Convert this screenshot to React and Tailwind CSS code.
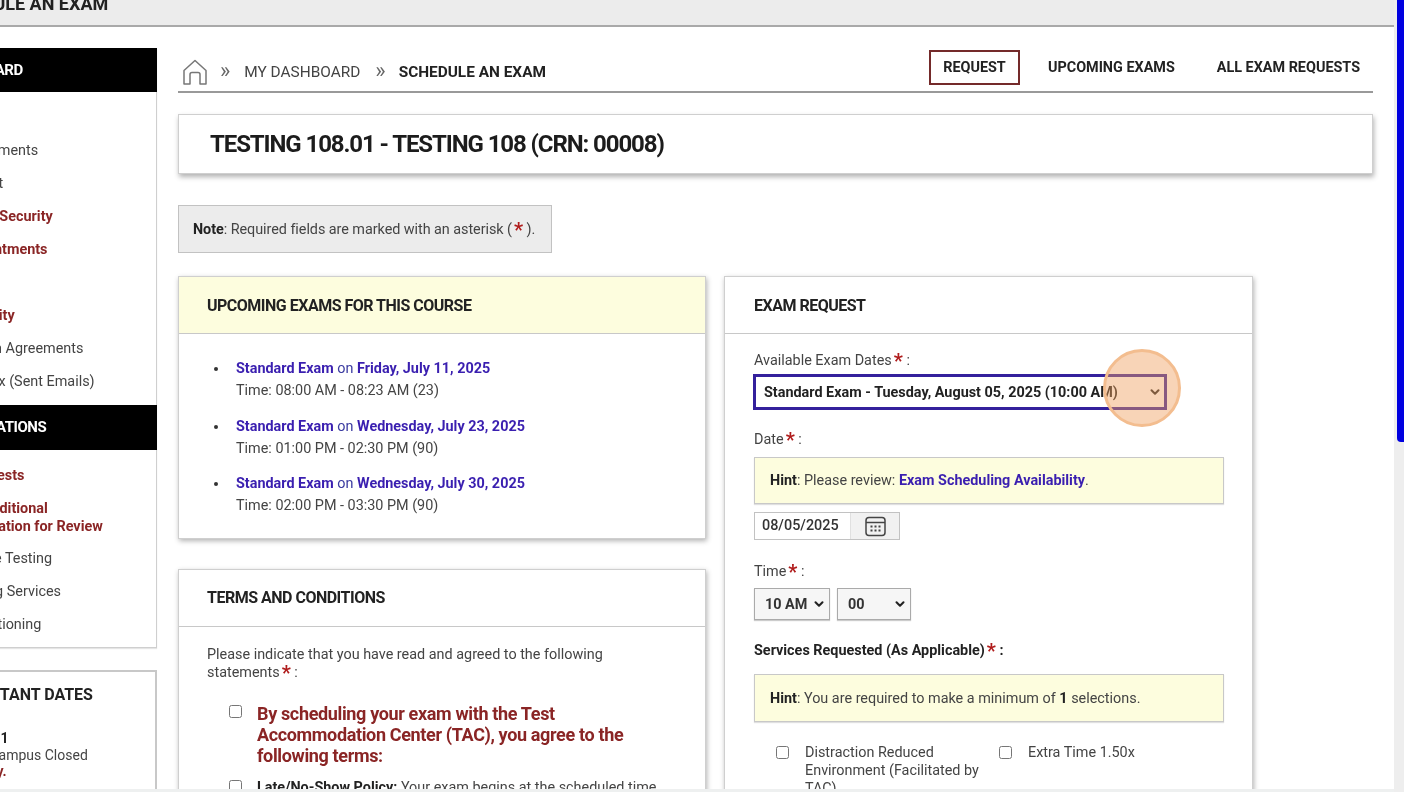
import { ChevronDown } from 'lucide-react';

const Star = () => <span className="text-[#b01c1c] font-bold text-[20px] leading-[14px] align-[-3px] ml-[2px]">*</span>;

const sideTop = [
  { text: 'View Documents', pad: 'pl-[73px]' },
  { text: 'My Account', pad: 'pl-[70px]' },
  { text: 'Account Security', red: true, pad: 'pl-[85px]' },
  { text: 'My Appointments', red: true, pad: 'pl-[76px]' },
  { text: 'Help' },
  { text: 'Accessibility', red: true },
  { text: 'Study Plan Agreements', pad: 'pl-[77px]' },
  { text: 'My Mailbox (Sent Emails)' },
];

const sideBottom = [
  { text: 'Test Requests', red: true },
  { text: ['Submit Additional', 'Documentation for Review'], red: true },
  { text: 'Alternative Testing', pad: 'pl-[76px]' },
  { text: 'Notetaking Services', pad: 'pl-[76px]' },
  { text: 'Video Captioning' },
];

const exams = [
  { day: 'Friday, July 11, 2025', time: 'Time: 08:00 AM - 08:23 AM (23)' },
  { day: 'Wednesday, July 23, 2025', time: 'Time: 01:00 PM - 02:30 PM (90)' },
  { day: 'Wednesday, July 30, 2025', time: 'Time: 02:00 PM - 03:30 PM (90)' },
];

function SideRow({ item }) {
  const lines = Array.isArray(item.text) ? item.text : [item.text];
  return (
    <div className={`min-h-[33px] py-[7px] text-[14.4px] leading-[18px] whitespace-nowrap ${item.pad || 'pl-[75px]'} ${item.red ? 'font-bold text-[#8a2525]' : 'text-[#444]'}`}>
      {lines.map((l) => <div key={l}>{l}</div>)}
    </div>
  );
}

function HomeIcon() {
  return (
    <svg width="26" height="27" viewBox="0 0 26 27" fill="none" stroke="#777" strokeWidth="1.5" strokeLinejoin="round">
      <path d="M2 11.5 L13 1.5 L24 11.5 V25 H18 V15.5 Q18 13.5 16 13.5 H10 Q8 13.5 8 15.5 V25 H2 Z" />
    </svg>
  );
}

function CalendarIcon() {
  return (
    <svg width="21" height="21" viewBox="0 0 21 21" fill="none" stroke="#444" strokeWidth="1.5">
      <rect x="1" y="1.5" width="19" height="18" rx="3" />
      <path d="M1 6.5 H20" />
      <g fill="#444" stroke="none">
        <rect x="5.5" y="9.5" width="2" height="2" />
        <rect x="9.5" y="9.5" width="2" height="2" />
        <rect x="13.5" y="9.5" width="2" height="2" />
        <rect x="5.5" y="13.5" width="2" height="2" />
        <rect x="9.5" y="13.5" width="2" height="2" />
        <rect x="13.5" y="13.5" width="2" height="2" />
      </g>
    </svg>
  );
}

function Hint({ h, children }) {
  return (
    <div className={`${h} flex items-center px-[15px] bg-[#fdfdde] border border-[#c8c8c8] shadow-[0_1px_1px_rgba(0,0,0,0.12)] text-[14.4px] text-[#444]`}>
      <p>{children}</p>
    </div>
  );
}

function TimeSelect({ width, value }) {
  return (
    <div className={`relative ${width}`}>
      <select className="appearance-none w-full h-[32px] pl-[10px] pt-[1px] bg-[#f6f6f6] border border-[#aaa] shadow-[0_1px_1px_rgba(0,0,0,0.2)] font-bold text-[#333]" defaultValue={value}>
        <option value={value}>{value}</option>
      </select>
      <ChevronDown size={14} strokeWidth={3.5} className="absolute right-[4px] top-[9px] text-[#222] pointer-events-none" />
    </div>
  );
}

export default function App() {
  return (
    <div className="flex h-[792px] w-[1404px] overflow-hidden bg-white text-[#333] blur-[0.5px]" style={{ fontFamily: 'Roboto, "Liberation Sans", sans-serif' }}>
      <div className="flex-1 min-w-0 flex flex-col">
        <header className="h-[27px] shrink-0 bg-[#ececec] border-b-2 border-[#a9a9a9] overflow-hidden">
          <h1 className="-ml-[64px] -mt-[8px] text-[18px] leading-[24px] font-bold text-[#222] whitespace-nowrap">SCHEDULE AN EXAM</h1>
        </header>

        <div className="flex-1 min-h-0 overflow-hidden flex gap-[21px] pt-[21px] pr-[21px]">
          {/* sidebar runs off the left of the window */}
          <aside className="w-[300px] -ml-[143px] shrink-0">
            <div className="border-r border-b border-[#cfcfcf] bg-white shadow-[0_1px_1px_rgba(0,0,0,0.1)]">
              <h2 className="h-[44px] -mr-[1px] flex items-center pl-[57px] bg-black text-white font-bold text-[15px] tracking-[-0.5px] whitespace-nowrap">MY DASHBOARD</h2>
              <div className="pt-[42.5px] pb-[6.5px]">
                {sideTop.map((i) => <SideRow key={i.text} item={i} />)}
              </div>
              <h2 className="h-[45px] -mr-[1px] flex items-center pl-[57px] bg-black text-white font-bold text-[15px] tracking-[-0.5px] whitespace-nowrap">ACCOMMODATIONS</h2>
              <div className="pt-[10px] pb-[5px]">
                {sideBottom.map((i) => <SideRow key={String(i.text)} item={i} />)}
              </div>
            </div>
            <div className="mt-[22px] h-[200px] border-2 border-[#c8c8c8] pt-[12px]">
              <h3 className="pl-[91px] text-[16px] font-bold leading-[22px] text-[#222] whitespace-nowrap">IMPORTANT DATES</h3>
              <div className="mt-[24px] text-[14px] leading-[16.5px] whitespace-nowrap">
                <div className="pl-[52px] font-bold text-[#222]">July 4, 2025 - 1</div>
                <div className="pl-[96px] text-[#444]">Main Campus Closed</div>
                <div className="pl-[97px] font-bold text-[#8a2525]">Holiday.</div>
              </div>
            </div>
          </aside>

          <main className="flex-1 min-w-0">
            {/* breadcrumb + tabs */}
            <div className="h-[45px] flex justify-between border-b-2 border-[#999]">
              <nav className="flex items-center pl-[4px] pt-[5px] h-[44px] text-[15.4px] whitespace-nowrap text-[#444]">
                <HomeIcon />
                <span className="text-[#666] text-[22px] leading-none ml-[12px] mr-[14px] -mt-[4px]">»</span>
                <span>MY DASHBOARD</span>
                <span className="text-[#666] text-[22px] leading-none ml-[15px] mr-[13px] -mt-[4px]">»</span>
                <span className="font-bold text-[#222]">SCHEDULE AN EXAM</span>
              </nav>
              <div className="flex items-start pr-[13px] text-[14.4px] font-bold text-[#222] whitespace-nowrap">
                <span className="h-[35px] w-[91px] mt-[2px] flex items-center justify-center border-2 border-[#742a2a] mr-[28px]">REQUEST</span>
                <span className="h-[35px] mt-[2px] flex items-center mr-[42px]">UPCOMING EXAMS</span>
                <span className="h-[35px] mt-[2px] flex items-center">ALL EXAM REQUESTS</span>
              </div>
            </div>

            <div className="mt-[21px] h-[60px] flex items-center pl-[31px] bg-white border border-[#cfcfcf] shadow-[1px_3px_5px_rgba(0,0,0,0.3)]">
              <h2 className="text-[24px] font-bold text-[#1c1c1c] tracking-[-1.1px]">TESTING 108.01 - TESTING 108 (CRN: 00008)</h2>
            </div>

            <div className="mt-[31px] w-[374px] h-[48px] flex items-center pl-[14px] pt-[1px] bg-[#ececec] border border-[#c2c2c2] text-[14.4px] text-[#444] whitespace-nowrap">
              <p className="tracking-[-0.05px]"><b className="text-[#222]">Note</b>: Required fields are marked with an asterisk (<Star /> ).</p>
            </div>

            <div className="mt-[23px] flex gap-[18px] items-start">
              {/* left column */}
              <div className="w-[528px] shrink-0">
                <section className="h-[263px] bg-white border border-[#cfcfcf] shadow-[1px_2px_5px_rgba(0,0,0,0.3)]">
                  <h3 className="h-[57px] flex items-center pl-[28px] pt-[1px] bg-[#fdfdde] border-b border-[#c8c8c8] text-[16px] tracking-[-0.5px] font-bold text-[#222]">UPCOMING EXAMS FOR THIS COURSE</h3>
                  <ul className="pt-[24px] pl-[35px] text-[14.4px] leading-[22px] text-[#444]">
                    {exams.map((e) => (
                      <li key={e.day} className="mb-[13.5px] flex gap-[18px]">
                        <span className="w-[4px] h-[4px] mt-[9px] rounded-full bg-[#333] shrink-0" />
                        <div>
                          <div><b className="text-[#3a1fb0]">Standard Exam</b> <span className="text-[#3a3aa0]">on</span> <b className="text-[#3a1fb0]">{e.day}</b></div>
                          <div>{e.time}</div>
                        </div>
                      </li>
                    ))}
                  </ul>
                </section>

                <section className="mt-[30px] h-[300px] bg-white border border-[#cfcfcf] shadow-[1px_2px_5px_rgba(0,0,0,0.3)]">
                  <h3 className="h-[57px] flex items-center pl-[28px] border-b border-[#c8c8c8] text-[16px] tracking-[-0.5px] font-bold text-[#222]">TERMS AND CONDITIONS</h3>
                  <div className="pl-[28px] pr-[60px] pt-[19px]">
                    <p className="text-[14.4px] leading-[18px] text-[#444]">Please indicate that you have read and agreed to the following statements<Star /> :</p>
                    <div className="mt-[21px] ml-[22px] flex gap-[15px]">
                      <input type="checkbox" className="w-[13px] h-[13px] mt-[2px] shrink-0" />
                      <p className="text-[18px] leading-[21px] font-bold tracking-[-0.35px] text-[#8a2525]">By scheduling your exam with the Test Accommodation Center (TAC), you agree to the following terms:</p>
                    </div>
                    <div className="mt-[13px] ml-[22px] flex gap-[15px]">
                      <input type="checkbox" className="w-[13px] h-[13px] mt-[1px] shrink-0" />
                      <p className="text-[14.4px] leading-[18px] text-[#444] whitespace-nowrap"><b className="text-[#222]">Late/No-Show Policy:</b> Your exam begins at the scheduled time</p>
                    </div>
                  </div>
                </section>
              </div>

              {/* right column */}
              <section className="w-[529px] shrink-0 h-[600px] bg-white border border-[#cfcfcf] shadow-[1px_2px_5px_rgba(0,0,0,0.3)]">
                <h3 className="h-[57px] flex items-center pl-[29px] pt-[1px] border-b border-[#c8c8c8] text-[16px] tracking-[-0.5px] font-bold text-[#222]">EXAM REQUEST</h3>
                <div className="pl-[29px] pr-[28px] pt-[17px] text-[14.4px] text-[#444]">
                  <label className="block leading-[20px]">Available Exam Dates<Star /> :</label>
                  <div className="relative mt-[3px] -ml-[1px] w-[414px]">
                    <select className="appearance-none w-full h-[36px] pl-[8px] pt-[2px] bg-white border-[3px] border-[#34209c] text-[14.4px] font-bold text-[#222]" defaultValue="a">
                      <option value="a">Standard Exam - Tuesday, August 05, 2025 (10:00 AM)</option>
                    </select>
                    <ChevronDown size={14} strokeWidth={3.5} className="absolute right-[5px] top-[11px] text-[#222] pointer-events-none" />
                    {/* click marker from the recording */}
                    <div className="absolute left-[350px] -top-[25px] w-[78px] h-[78px] rounded-full bg-[#f0a060]/45 border-[3px] border-[#f3bd8f]" />
                  </div>

                  <label className="block mt-[20px] leading-[20px]">Date<Star /> :</label>
                  <div className="mt-[7px]">
                    <Hint h="h-[47px]"><b className="text-[#222]">Hint</b>: Please review: <b className="text-[#3a1fb0]">Exam Scheduling Availability</b>.</Hint>
                  </div>
                  <div className="mt-[8px] w-[146px] h-[28px] flex border border-[#c2c2c2]">
                    <div className="w-[95px] flex items-center pl-[7px] font-medium text-[#333]">08/05/2025</div>
                    <div className="flex-1 flex items-center justify-center bg-[#f1f1f1] border-l border-[#e0e0e0]"><CalendarIcon /></div>
                  </div>

                  <label className="block mt-[22px] leading-[20px]">Time<Star /> :</label>
                  <div className="mt-[6px] flex gap-[7px]">
                    <TimeSelect width="w-[76px]" value="10 AM" />
                    <TimeSelect width="w-[74px]" value="00" />
                  </div>

                  <label className="block mt-[21px] leading-[20px] font-bold text-[#222]">Services Requested (As Applicable)<Star /> :</label>
                  <div className="mt-[13px]">
                    <Hint h="h-[48px] pt-[1px]"><b className="text-[#222]">Hint</b>: You are required to make a minimum of <b className="text-[#222]">1</b> selections.</Hint>
                  </div>

                  <div className="mt-[22px] pl-[22px] flex leading-[18px]">
                    <div className="w-[223px] flex gap-[16px]">
                      <input type="checkbox" className="w-[13px] h-[13px] mt-[2px] shrink-0" />
                      <span className="w-[180px]">Distraction Reduced Environment (Facilitated by TAC)</span>
                    </div>
                    <div className="flex gap-[16px]">
                      <input type="checkbox" className="w-[13px] h-[13px] mt-[2px] shrink-0" />
                      <span>Extra Time 1.50x</span>
                    </div>
                  </div>
                </div>
              </section>
            </div>
          </main>
        </div>

        <div className="h-[3px] shrink-0 bg-[#eef0f0]" />
      </div>

      {/* scrollbar */}
      <div className="w-[10px] shrink-0 bg-[#eeeeee] pl-[3px]">
        <div className="h-[442px] bg-[#0000e0] rounded-bl-[4px]" />
      </div>
    </div>
  );
}
